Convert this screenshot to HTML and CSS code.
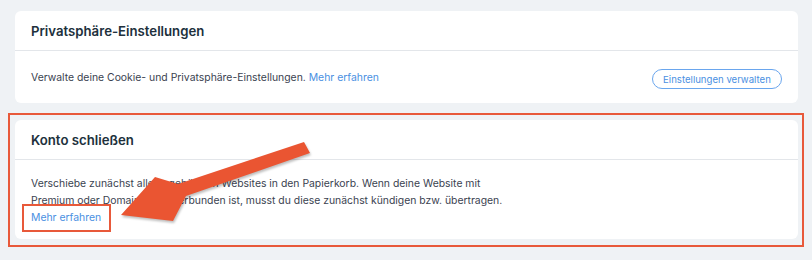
FILE: index.html
```html
<!DOCTYPE html>
<html lang="de">
<head>
<meta charset="utf-8">
<link rel="stylesheet" href="styles.css">
</head>
<body>
<div class="page">
  <section class="card">
    <div class="card-head"><h2 class="title">Privatsphäre-Einstellungen</h2></div>
    <div class="card-body row">
      <p class="text">Verwalte deine Cookie- und Privatsphäre-Einstellungen. <a class="link" href="#">Mehr erfahren</a></p>
      <button class="btn">Einstellungen verwalten</button>
    </div>
  </section>
  <div class="highlight">
    <section class="card">
      <div class="card-head"><h2 class="title">Konto schließen</h2></div>
      <div class="card-body body2">
        <p class="text">Verschiebe zunächst alle zugehörigen Websites in den Papierkorb. Wenn deine Website mit<br>Premium oder Domain-Abos verbunden ist, musst du diese zunächst kündigen bzw. übertragen.</p>
        <p class="text"><a class="link boxed" href="#">Mehr erfahren</a></p>
      </div>
    </section>
  </div>
</div>
<svg class="arrow" width="812" height="260" viewBox="0 0 812 260">
  <polygon points="304,142 310,153 186,196 173,221 121,215 155,177 178,184" fill="#ea5532"/>
</svg>
</body>
</html>
```
FILE: styles.css
```css
* { box-sizing: border-box; }
html, body { margin: 0; padding: 0; }
body {
  width: 812px;
  height: 260px;
  background: #eff2f5;
  font-family: "Inter", "Helvetica", sans-serif;
  color: #3a4250;
  position: relative;
  overflow: hidden;
}
.page {
  padding: 11px 14px 0 15px;
  display: flex;
  flex-direction: column;
}
.card {
  background: #fff;
  border-radius: 6px;
  width: 783px;
}
.card-head {
  height: 40px;
  display: flex;
  align-items: center;
  padding: 0 16px;
  border-bottom: 1px solid #e3e6ea;
}
.title {
  margin: 0;
  font-size: 13.2px;
  font-weight: 600;
  color: #20303c;
}
.card-body { padding: 0 16px; }
.row {
  height: 52px;
  display: flex;
  align-items: center;
  justify-content: space-between;
}
.text {
  margin: 0;
  font-size: 10.4px;
  line-height: 17px;
  color: #3a4250;
}
.link { color: #4a90e2; text-decoration: none; }
.btn {
  margin-top: 4px;
  height: 20px;
  width: 130px;
  border: 1px solid #6aa6ee;
  border-radius: 10px;
  background: #fff;
  color: #4a90e2;
  font-family: inherit;
  font-size: 9.6px;
  padding: 0;
  margin-right: 0;
}
.highlight {
  margin: 10px 0 0 -7px;
  width: 796px;
  border: 2px solid #e8593a;
  padding: 5px 4px 6px 5px;
}
.body2 { padding-top: 15px; padding-bottom: 13px; }
.boxed { position: relative; }
.boxed::after {
  content: "";
  position: absolute;
  left: -9px;
  right: -10px;
  top: -7px;
  bottom: -8px;
  border: 2px solid #e8593a;
}
.arrow {
  position: absolute;
  left: 0;
  top: 0;
  filter: drop-shadow(1px 2px 1px rgba(0,0,0,0.25));
}
```
